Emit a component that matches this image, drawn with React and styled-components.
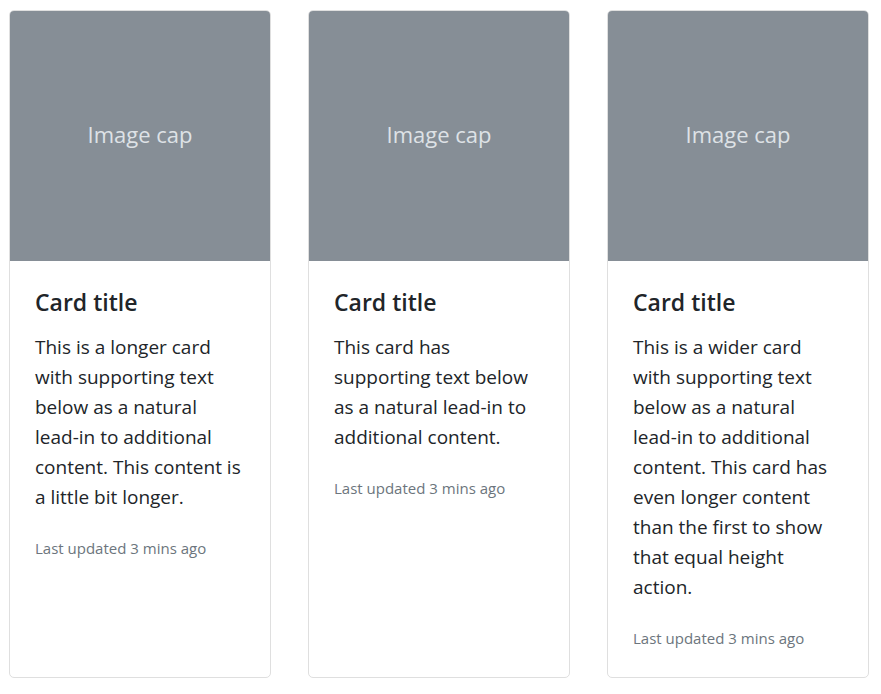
import React from "react";
import styled, { createGlobalStyle } from "styled-components";

const GlobalStyle = createGlobalStyle`
  *, *::before, *::after { box-sizing: border-box; }
  body {
    margin: 0;
    background: #fff;
    color: #212529;
    font-family: "Segoe UI", "Open Sans", "Noto Sans", sans-serif;
    font-size: 19px;
    line-height: 30px;
  }
`;

const Deck = styled.main`
  display: grid;
  grid-template-columns: repeat(3, minmax(0, 1fr));
  gap: 37px;
  padding: 10px 12px 16px 9px;
`;

const Card = styled.article`
  display: flex;
  flex-direction: column;
  border: 1px solid #dfdfdf;
  border-radius: 5px;
  background: #fff;
  overflow: hidden;
`;

const ImageCap = styled.div`
  display: flex;
  align-items: center;
  justify-content: center;
  height: 250px;
  padding-bottom: 4px;
  background: #868e96;
  color: #dee2e6;
  font-size: 22px;
`;

const CardBody = styled.div`
  padding: 26px 25px 24px;
`;

const CardTitle = styled.h5`
  margin: 0 0 15px;
  font-size: 23px;
  font-weight: 600;
  line-height: 30px;
`;

const CardText = styled.p`
  margin: 0 0 21px;
`;

const Updated = styled.small`
  display: block;
  color: #6c757d;
  font-size: 15px;
`;

const cards = [
  "This is a longer card with supporting text below as a natural lead-in to additional content. This content is a little bit longer.",
  "This card has supporting text below as a natural lead-in to additional content.",
  "This is a wider card with supporting text below as a natural lead-in to additional content. This card has even longer content than the first to show that equal height action.",
];

export default function App() {
  return (
    <>
      <GlobalStyle />
      <Deck>
        {cards.map((text) => (
          <Card key={text}>
            <ImageCap>Image cap</ImageCap>
            <CardBody>
              <CardTitle>Card title</CardTitle>
              <CardText>{text}</CardText>
              <Updated>Last updated 3 mins ago</Updated>
            </CardBody>
          </Card>
        ))}
      </Deck>
    </>
  );
}
